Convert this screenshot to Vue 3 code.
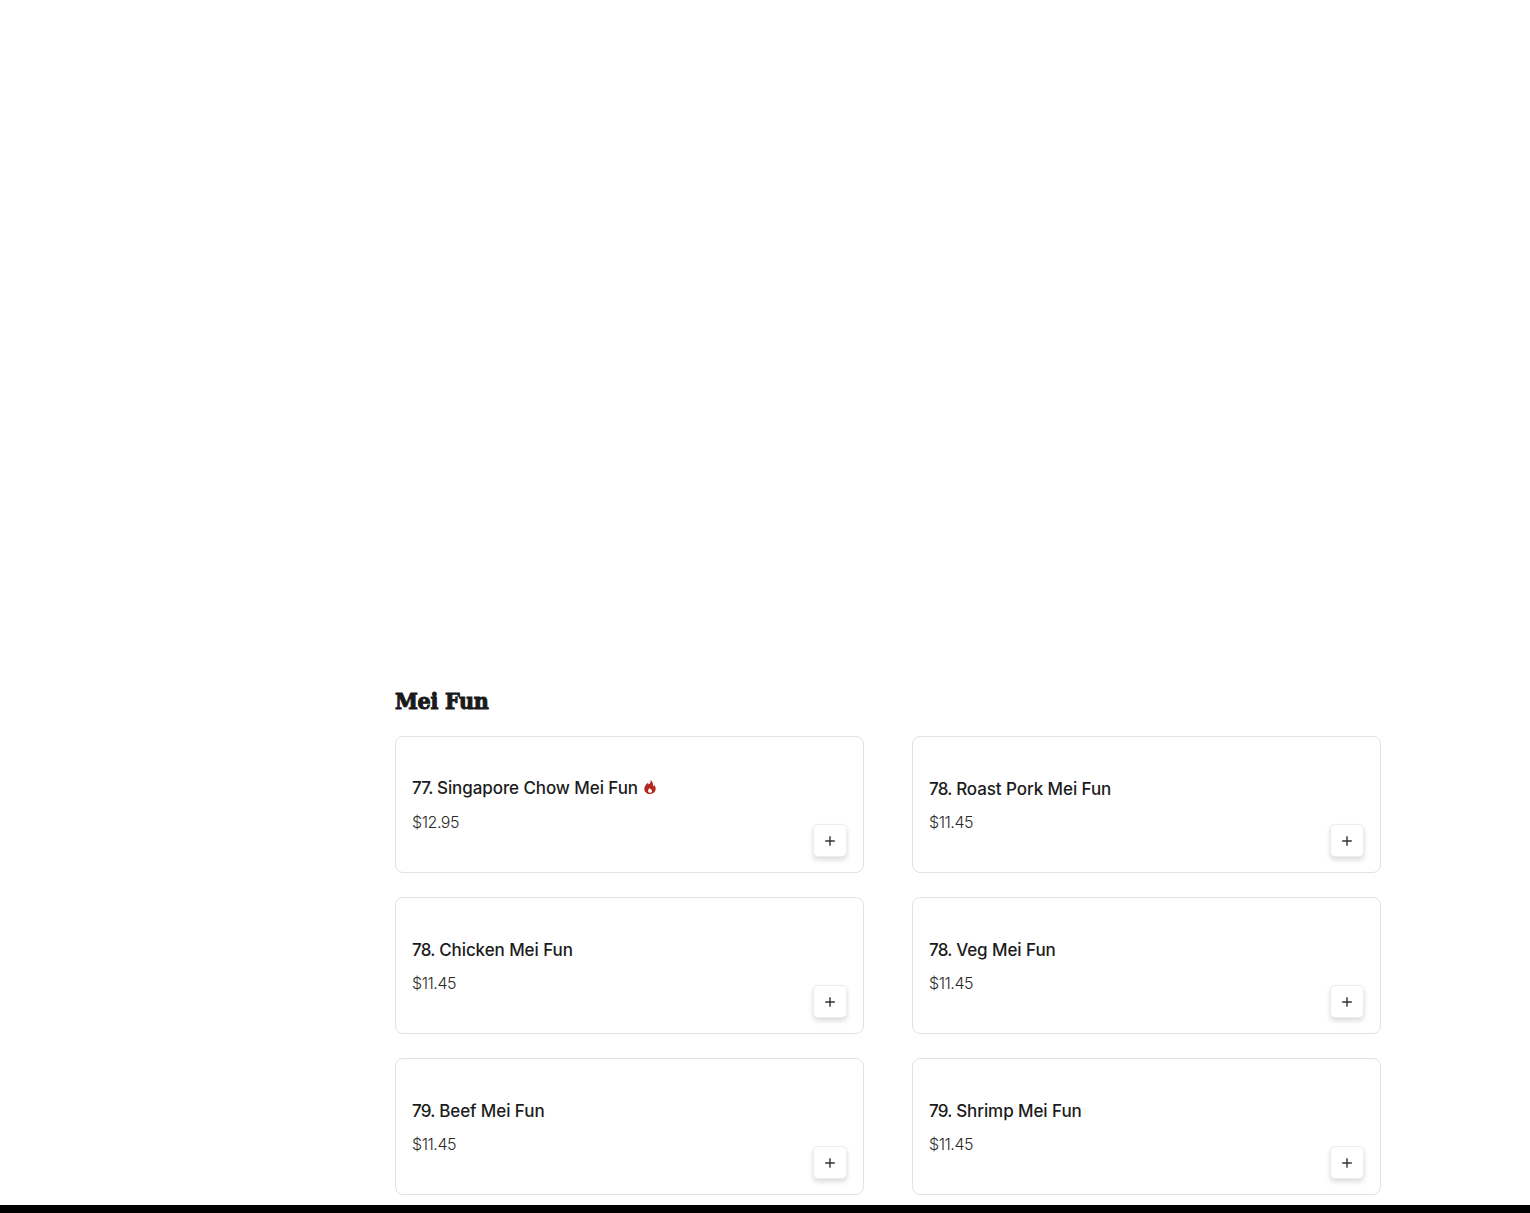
<script setup>
const items = [
  { num: '77.', name: 'Singapore Chow Mei Fun', price: '$12.95', spicy: true },
  { num: '78.', name: 'Roast Pork Mei Fun', price: '$11.45' },
  { num: '78.', name: 'Chicken Mei Fun', price: '$11.45' },
  { num: '78.', name: 'Veg Mei Fun', price: '$11.45' },
  { num: '79.', name: 'Beef Mei Fun', price: '$11.45' },
  { num: '79.', name: 'Shrimp Mei Fun', price: '$11.45' }
]
</script>

<template>
  <div class="page">
    <main class="menu">
      <h2 class="title">Mei Fun</h2>
      <div class="grid">
        <div v-for="item in items" :key="item.name" class="card">
          <div class="name" :class="{ spicy: item.spicy }">
            <span class="label"><span class="num">{{ item.num }}</span> {{ item.name }}</span>
            <svg v-if="item.spicy" class="flame" viewBox="0 0 12 14" width="12" height="14">
              <path fill="#b3261e" fill-rule="evenodd" d="M6.600 0C7 2.200 5.900 3.300 4.900 4.600 4.400 4.100 4.100 3.500 4 2.800 2 4.400.3 6.500.3 9c0 2.900 2.500 5 5.700 5s5.700-2.200 5.700-5.200c0-1.500-.6-2.900-1.400-3.900-.2.800-.5 1.300-1 1.700C9.200 4 8.500 1.400 6.600 0zM6.100 12.800c-1.200 0-2-.8-2-1.900 0-1 .8-1.700 1.500-2.800.5.900 2.400 1.600 2.400 2.900 0 1-.8 1.800-1.900 1.800z"/>
            </svg>
          </div>
          <div class="price">{{ item.price }}</div>
          <button class="add" type="button" aria-label="Add">
            <svg viewBox="0 0 10 10" width="10" height="10">
              <path d="M5 0.200v9.600M0.200 5h9.600" stroke="#333" stroke-width="1.400" fill="none"/>
            </svg>
          </button>
        </div>
      </div>
    </main>
    <div class="footer"></div>
  </div>
</template>

<style scoped>
.page {
  height: 1213px;
  overflow: hidden;
  background: #fff;
  display: flex;
  flex-direction: column;
}
.menu {
  flex: 1;
  padding: 685px 149px 0 395px;
  min-height: 0;
}
.title {
  margin: 0 0 20px;
  font-family: "DejaVu Serif Condensed", "DejaVu Serif", serif;
  font-weight: 700;
  font-size: 23px;
  line-height: 31px;
  color: #1a1a1a;
  -webkit-text-stroke: 1px #1a1a1a;
  letter-spacing: -0.3px;
}
.grid {
  display: grid;
  grid-template-columns: 469px 469px;
  column-gap: 48px;
  row-gap: 24px;
}
.card {
  position: relative;
  box-sizing: border-box;
  height: 137px;
  padding: 41px 16px 0;
  border: 1px solid #e2e2e2;
  border-radius: 8px;
  background: #fff;
}
.name {
  display: flex;
  align-items: center;
  gap: 6px;
  height: 22px;
  font-family: "Inter", sans-serif;
  font-weight: 500;
  font-size: 17px;
  line-height: 22px;
  letter-spacing: -0.08px;
  color: #1c1c1c;
}
.name.spicy {
  margin-top: -1px;
  padding-bottom: 1px;
}
.num {
  letter-spacing: -0.75px;
}
.flame {
  display: block;
  margin-top: -2px;
}
.price {
  margin-top: 11px;
  font-family: "Inter", sans-serif;
  font-weight: 300;
  font-size: 16px;
  line-height: 22px;
  letter-spacing: -0.45px;
  color: #2a2a2a;
}
.add {
  position: absolute;
  right: 16px;
  bottom: 15px;
  display: flex;
  align-items: center;
  justify-content: center;
  width: 34px;
  height: 33px;
  padding: 1px 0 0;
  border: 1px solid #ececec;
  border-radius: 5px;
  background: #fff;
  box-shadow: 0 3px 5px rgba(0, 0, 0, 0.14);
}
.footer {
  height: 8px;
  background: #000;
  flex: none;
}
</style>

<style>
html, body {
  margin: 0;
  background: #fff;
}
</style>
